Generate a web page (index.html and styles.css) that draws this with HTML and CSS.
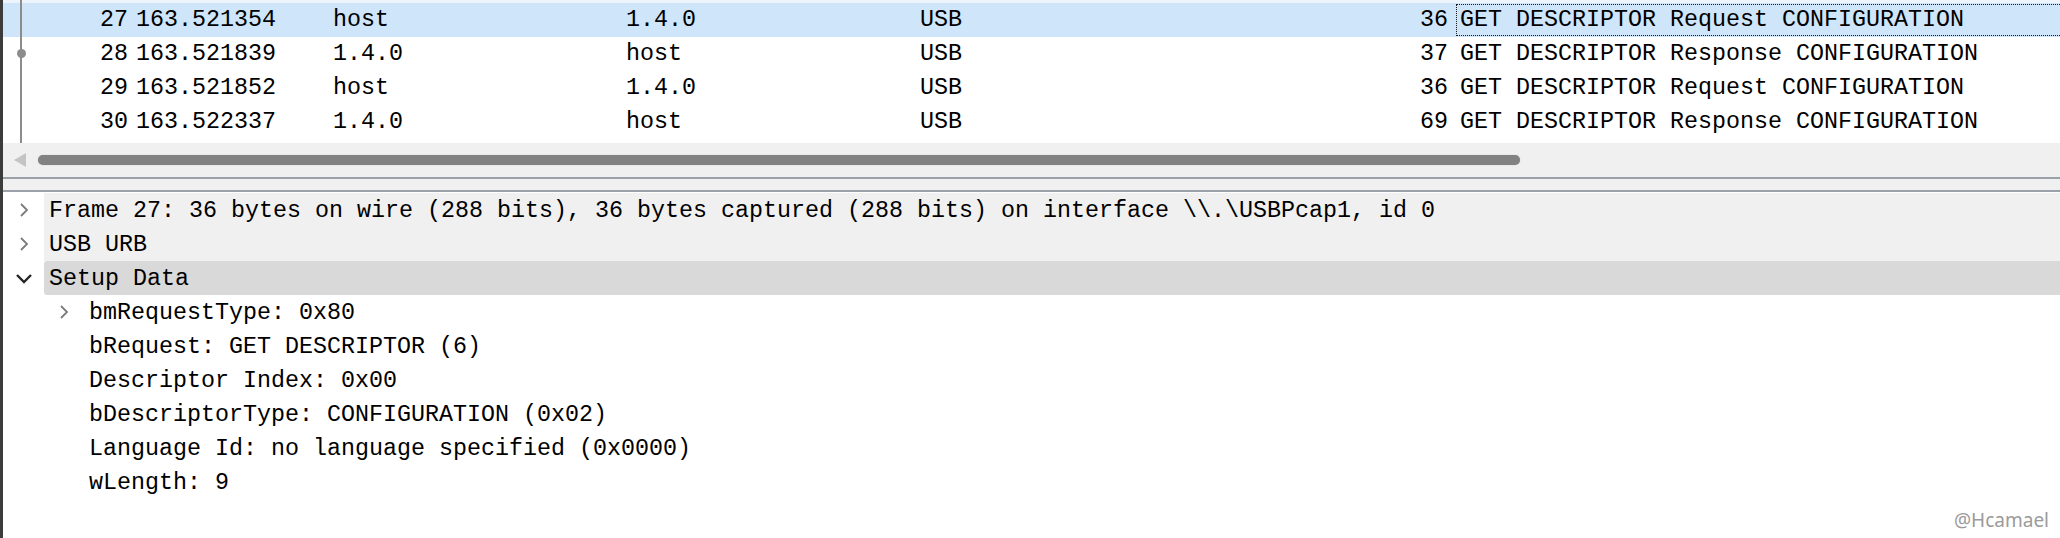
FILE: index.html
```html
<!DOCTYPE html>
<html>
<head>
<meta charset="utf-8">
<link rel="stylesheet" href="styles.css">
</head>
<body>
<div class="window">
  <div class="packet-pane">
    <div class="packet-list">
      <div class="related-line"><span class="related-dot"></span></div>
      <div class="top-strip"></div>
      <div class="prow selected">
        <span class="c-no">27</span><span class="c-time">163.521354</span><span class="c-src">host</span><span class="c-dst">1.4.0</span><span class="c-proto">USB</span><span class="c-len">36</span><span class="c-info focus">GET DESCRIPTOR Request CONFIGURATION</span>
      </div>
      <div class="prow">
        <span class="c-no">28</span><span class="c-time">163.521839</span><span class="c-src">1.4.0</span><span class="c-dst">host</span><span class="c-proto">USB</span><span class="c-len">37</span><span class="c-info">GET DESCRIPTOR Response CONFIGURATION</span>
      </div>
      <div class="prow">
        <span class="c-no">29</span><span class="c-time">163.521852</span><span class="c-src">host</span><span class="c-dst">1.4.0</span><span class="c-proto">USB</span><span class="c-len">36</span><span class="c-info">GET DESCRIPTOR Request CONFIGURATION</span>
      </div>
      <div class="prow">
        <span class="c-no">30</span><span class="c-time">163.522337</span><span class="c-src">1.4.0</span><span class="c-dst">host</span><span class="c-proto">USB</span><span class="c-len">69</span><span class="c-info">GET DESCRIPTOR Response CONFIGURATION</span>
      </div>
      <div class="list-tail"></div>
    </div>
    <div class="hscroll">
      <svg class="scroll-arrow" width="12" height="14" viewBox="0 0 12 14"><polygon points="0,7 12,0 12,14" fill="#c4c4c4"/></svg>
      <div class="thumb"></div>
    </div>
  </div>
  <div class="splitter"></div>
  <div class="details">
    <div class="node shade">
      <span class="twisty"><svg width="10" height="16" viewBox="0 0 10 16"><polyline points="2,2 8,8 2,14" fill="none" stroke="#7c7c7c" stroke-width="1.8"/></svg></span>
      <span class="label">Frame 27: 36 bytes on wire (288 bits), 36 bytes captured (288 bits) on interface \\.\USBPcap1, id 0</span>
    </div>
    <div class="node shade">
      <span class="twisty"><svg width="10" height="16" viewBox="0 0 10 16"><polyline points="2,2 8,8 2,14" fill="none" stroke="#7c7c7c" stroke-width="1.8"/></svg></span>
      <span class="label">USB URB</span>
    </div>
    <div class="node current">
      <span class="twisty"><svg width="18" height="11" viewBox="0 0 18 11"><polyline points="2,2 9,9 16,2" fill="none" stroke="#262626" stroke-width="2.4"/></svg></span>
      <span class="label">Setup Data</span>
    </div>
    <div class="node child">
      <span class="twisty"><svg width="10" height="16" viewBox="0 0 10 16"><polyline points="2,2 8,8 2,14" fill="none" stroke="#7c7c7c" stroke-width="1.8"/></svg></span>
      <span class="label">bmRequestType: 0x80</span>
    </div>
    <div class="node child">
      <span class="twisty"></span>
      <span class="label">bRequest: GET DESCRIPTOR (6)</span>
    </div>
    <div class="node child">
      <span class="twisty"></span>
      <span class="label">Descriptor Index: 0x00</span>
    </div>
    <div class="node child">
      <span class="twisty"></span>
      <span class="label">bDescriptorType: CONFIGURATION (0x02)</span>
    </div>
    <div class="node child">
      <span class="twisty"></span>
      <span class="label">Language Id: no language specified (0x0000)</span>
    </div>
    <div class="node child">
      <span class="twisty"></span>
      <span class="label">wLength: 9</span>
    </div>
  </div>
  <div class="watermark">@Hcamael</div>
</div>
</body>
</html>
```
FILE: styles.css
```css
html, body {
  margin: 0;
  padding: 0;
  background: #ffffff;
  overflow: hidden;
}

.window {
  position: relative;
  width: 2057px;
  height: 538px;
  border-left: 3px solid #3c3c3c;
  background: #ffffff;
  font-family: "Liberation Mono", "DejaVu Sans Mono", monospace;
  font-size: 23.33px;
  color: #000000;
  overflow: hidden;
}

/* ---------- packet list ---------- */
.packet-pane {
  display: flex;
  flex-direction: column;
}

.packet-list {
  position: relative;
  overflow: hidden;
  background: #ffffff;
}

.top-strip {
  height: 3px;
  background: #eef4fb;
}

.list-tail {
  height: 4px;
}

.related-line {
  position: absolute;
  left: 17px;
  top: 0;
  bottom: 0;
  width: 2px;
  background: #8c8c8c;
  z-index: 2;
}

.related-dot {
  position: absolute;
  left: -3.5px;
  top: 48.5px;
  width: 9px;
  height: 9px;
  border-radius: 50%;
  background: #8c8c8c;
}

.prow {
  display: grid;
  grid-template-columns: 125px 205px 293px 294px 460px 72px 720px;
  height: 34px;
  line-height: 35px;
  white-space: nowrap;
}

.prow.selected {
  background: #cfe5f9;
}

.c-no {
  text-align: right;
}

.c-time {
  padding-left: 8px;
}

.c-len {
  text-align: right;
  padding-right: 4px;
}

.c-info {
  margin-left: 4px;
  padding-left: 4px;
}

.c-info.focus {
  margin-top: 1px;
  height: 30px;
  line-height: 31px;
  padding-left: 3px;
  border: 1px dotted #1a1a1a;
}

/* ---------- horizontal scrollbar ---------- */
.hscroll {
  display: flex;
  align-items: center;
  gap: 12px;
  height: 34px;
  padding-left: 11px;
  background: #f0f0f0;
}

.scroll-arrow {
  display: block;
  flex: none;
}

.thumb {
  width: 1482px;
  height: 10px;
  border-radius: 5px;
  background: #828282;
  box-shadow: 0 0 1px #a8a8a8;
}

/* ---------- splitter ---------- */
.splitter {
  height: 11px;
  background: #f0f0f0;
  border-top: 2px solid #9ba1a8;
  border-bottom: 2px solid #9ba1a8;
}

/* ---------- details tree ---------- */
.details {
  padding-top: 1px;
}

.node {
  display: flex;
  height: 34px;
  white-space: nowrap;
}

.node.child {
  padding-left: 40px;
}

.twisty {
  flex: none;
  width: 41px;
  display: flex;
  align-items: center;
  justify-content: center;
}

.twisty svg {
  display: block;
}

.label {
  flex: 1;
  padding-left: 5px;
  line-height: 36px;
}

.node.shade .label {
  background: #f0f0f0;
}

.node.current .label {
  background: #d9d9d9;
  border-radius: 3px 0 0 3px;
}

/* ---------- watermark ---------- */
.watermark {
  position: absolute;
  right: 11px;
  bottom: 7px;
  font-family: "Noto Sans", "DejaVu Sans", sans-serif;
  font-size: 19px;
  line-height: 22px;
  color: #9b9b9b;
}
```
